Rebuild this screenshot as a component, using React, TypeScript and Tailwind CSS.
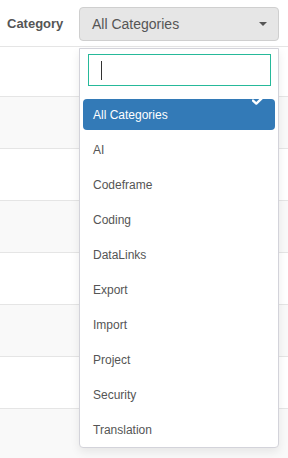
import React from "react";

const categories = [
  "AI",
  "Codeframe",
  "Coding",
  "DataLinks",
  "Export",
  "Import",
  "Project",
  "Security",
  "Translation",
];

const rowShades = [
  "bg-white",
  "bg-[#f9f9f9]",
  "bg-white",
  "bg-[#f9f9f9]",
  "bg-white",
  "bg-[#f9f9f9]",
  "bg-white",
  "bg-[#f9f9f9]",
];

const App: React.FC = () => {
  return (
    <div
      className="relative w-[288px] h-[458px] overflow-hidden bg-white"
      style={{ fontFamily: '"Liberation Sans", Arial, sans-serif' }}
    >
      {/* Filter header */}
      <div className="flex items-center h-[47px] pl-[7px] pt-[2px] border-b border-[#e5e5e5]">
        <span className="text-[13px] font-bold text-[#555] w-[72px]">
          Category
        </span>
        <div className="flex items-center justify-between w-[200px] h-[34px] px-[12px] bg-[#e6e6e6] border border-[#cfcfcf] rounded-[4px]">
          <span className="text-[14px] text-[#555]">All Categories</span>
          <span className="w-0 h-0 border-l-[4px] border-r-[4px] border-t-[4px] border-l-transparent border-r-transparent border-t-[#555] mr-[-1px]" />
        </div>
      </div>

      {/* Table rows behind */}
      <div className="flex flex-col">
        <div className="h-[50px] bg-white border-b border-[#e5e5e5]" />
        {rowShades.slice(1).map((shade, i) => (
          <div
            key={i}
            className={`h-[52px] border-b border-[#e5e5e5] ${shade}`}
          />
        ))}
      </div>

      {/* Open dropdown */}
      <div className="absolute left-[79px] top-[48px] w-[200px] h-[400px] bg-white border border-[#d3d3da] rounded-b-[4px] shadow-[0_4px_10px_rgba(0,0,0,0.08)]">
        <div className="pt-[5px] pl-[8px] pr-[7px]">
          <div className="flex items-center h-[32px] border border-[#26b99a] bg-white pl-[12px]">
            <span className="w-px h-[19px] bg-[#333]" />
          </div>
        </div>
        <ul className="mt-[11px] px-[3px]">
          <li className="h-[35px] py-[2px]">
            <div className="relative flex items-center h-full pl-[10px] bg-[#337ab7] rounded-[4px] text-[12px] text-white">
              All Categories
              <svg
                className="absolute right-[11px] top-[-3px]"
                width="12"
                height="9"
                viewBox="0 0 12 9"
              >
                <path
                  d="M1 4.6 L4.3 7.6 L11 1.2"
                  fill="none"
                  stroke="white"
                  strokeWidth="2.4"
                  strokeLinecap="round"
                  strokeLinejoin="round"
                />
              </svg>
            </div>
          </li>
          {categories.map((c) => (
            <li
              key={c}
              className="flex items-center h-[35px] pl-[10px] text-[12px] text-[#555]"
            >
              {c}
            </li>
          ))}
        </ul>
      </div>
    </div>
  );
};

export default App;
